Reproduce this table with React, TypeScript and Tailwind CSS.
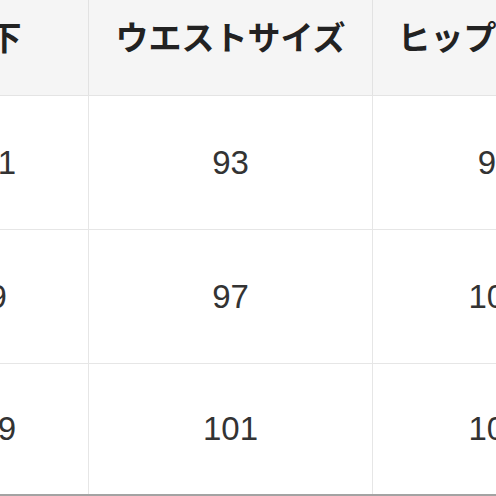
import React from "react";

const rows = [
  ["101", "93", "99"],
  ["99", "97", "103"],
  ["109", "101", "107"],
];

export default function App() {
  const font = { fontFamily: '"Liberation Sans", Arial, sans-serif' };
  const jp = { fontFamily: '"Noto Sans CJK JP", "Noto Sans", sans-serif' };
  return (
    <div className="w-[496px] h-[496px] overflow-hidden bg-white">
      <div className="ml-[-89px] mt-[-21px] w-[708px]">
        <div className="grid grid-cols-[178px_284px_246px] h-[117px] bg-[#f5f5f5] border-b border-[#e4e4e4] text-[33px] font-bold text-[#222]" style={jp}>
          <div className="flex items-center justify-center border-r border-[#e2e2e2] pr-[22px]">股下</div>
          <div className="flex items-center justify-center border-r border-[#e2e2e2]">ウエストサイズ</div>
          <div className="flex items-center justify-center">ヒップサイズ</div>
        </div>
        {rows.map((r, i) => (
          <div
            key={i}
            className={
              i === rows.length - 1
                ? "grid grid-cols-[178px_284px_246px] h-[132px] border-b-2 border-[#a3a3a3] text-[33px] text-[#333]"
                : "grid grid-cols-[178px_284px_246px] h-[134px] border-b border-[#e6e6e6] text-[33px] text-[#333]"
            }
            style={font}
          >
            <div className="flex items-center justify-center border-r border-[#e6e6e6] pr-[22px]">{r[0]}</div>
            <div className="flex items-center justify-center border-r border-[#e6e6e6]">{r[1]}</div>
            <div className="flex items-center justify-center">{r[2]}</div>
          </div>
        ))}
      </div>
    </div>
  );
}
